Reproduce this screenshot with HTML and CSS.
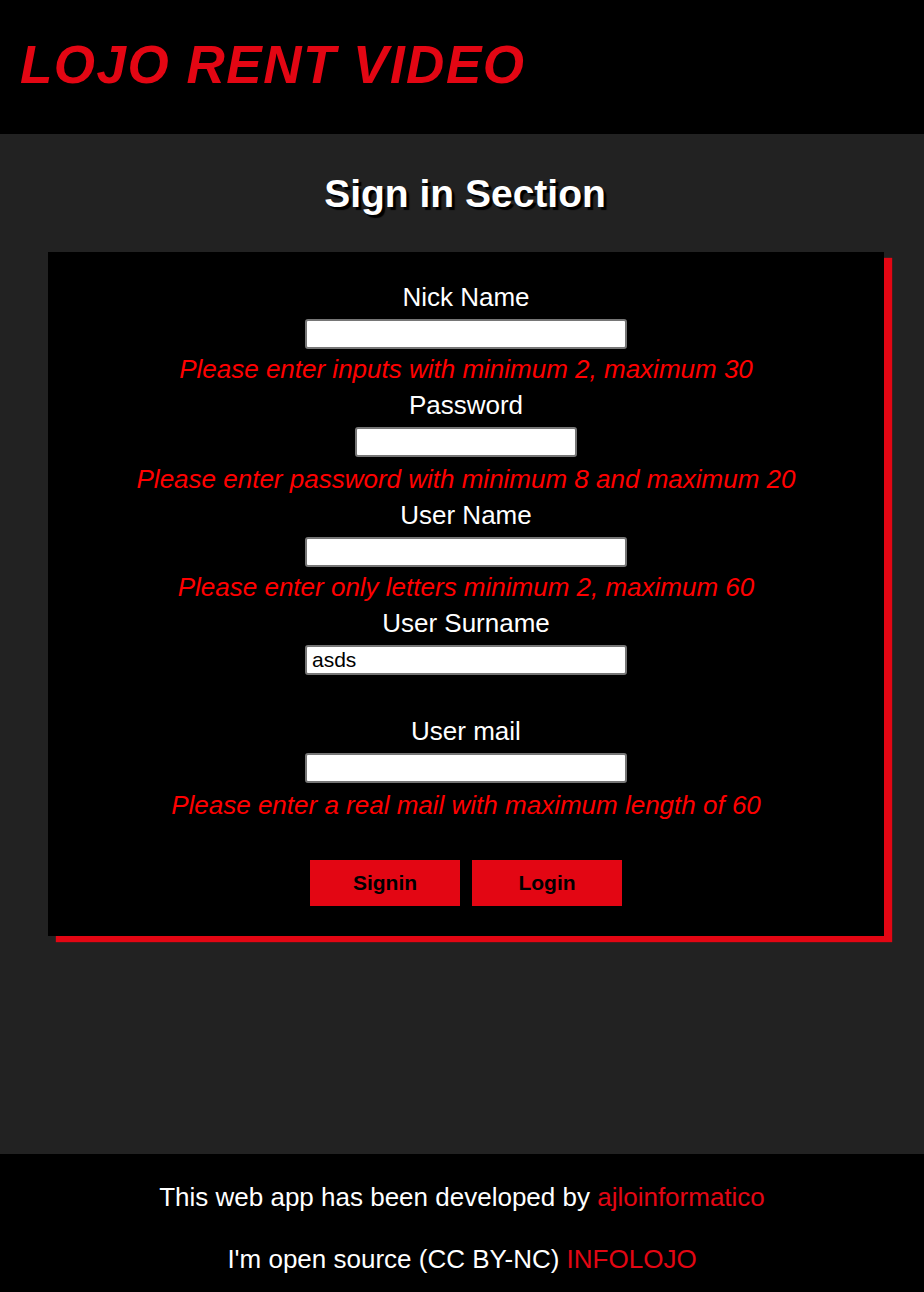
FILE: index.html
```html
<!DOCTYPE html>
<html lang="en">
<head>
<meta charset="utf-8">
<title>Lojo Rent Video</title>
<link rel="stylesheet" href="styles.css">
</head>
<body>
<header class="top">
  <h1 class="brand">LOJO RENT VIDEO</h1>
</header>
<main class="main">
  <h2 class="section-title">Sign in Section</h2>
  <form class="card">
    <div class="field">
      <label class="label" for="nick">Nick Name</label>
      <input class="input" id="nick" type="text">
      <p class="error">Please enter inputs with minimum 2, maximum 30</p>
    </div>
    <div class="field">
      <label class="label" for="pass">Password</label>
      <input class="input input-short" id="pass" type="password">
      <p class="error error-low">Please enter password with minimum 8 and maximum 20</p>
    </div>
    <div class="field">
      <label class="label" for="uname">User Name</label>
      <input class="input" id="uname" type="text">
      <p class="error">Please enter only letters minimum 2, maximum 60</p>
    </div>
    <div class="field">
      <label class="label" for="usurname">User Surname</label>
      <input class="input" id="usurname" type="text" value="asds">
      <p class="error"></p>
    </div>
    <div class="field">
      <label class="label" for="umail">User mail</label>
      <input class="input" id="umail" type="email">
      <p class="error error-low">Please enter a real mail with maximum length of 60</p>
    </div>
    <div class="actions">
      <button class="btn" type="button">Signin</button>
      <button class="btn" type="button">Login</button>
    </div>
  </form>
</main>
<footer class="footer">
  <p class="foot-line">This web app has been developed by <a class="foot-link" href="#">ajloinformatico</a></p>
  <p class="foot-line">I'm open source (CC BY-NC) <a class="foot-link" href="#">INFOLOJO</a></p>
</footer>
</body>
</html>
```

FILE: styles.css
```css
* { box-sizing: border-box; }
html, body { margin: 0; padding: 0; }
body {
  background: #222222;
  font-family: "Liberation Sans", Arial, sans-serif;
  color: #ffffff;
  width: 924px;
  height: 1292px;
  display: flex;
  flex-direction: column;
}
.top {
  background: #000000;
  height: 134px;
  display: flex;
  align-items: center;
  padding-left: 20px;
}
.brand {
  margin: -3px 0 0 0;
  font-size: 53px;
  font-weight: bold;
  font-style: italic;
  letter-spacing: 1.5px;
  color: #e30613;
  line-height: 1.15;
}
.main {
  flex: 1;
  padding-top: 37px;
}
.section-title {
  margin: 0;
  padding-left: 6px;
  text-align: center;
  font-size: 39px;
  font-weight: bold;
  line-height: 45px;
  color: #ffffff;
  text-shadow: 3px 3px 1px #000000;
}
.card {
  margin: 36px 0 0 48px;
  width: 836px;
  background: #000000;
  box-shadow: 8px 6px 1px #e30613;
  padding: 31px 0 30px;
  display: flex;
  flex-direction: column;
  align-items: center;
  gap: 8px;
}
.field {
  display: flex;
  flex-direction: column;
  align-items: center;
}
.label {
  font-size: 26px;
  line-height: 28px;
  color: #ffffff;
}
.input {
  margin-top: 8px;
  width: 322px;
  height: 30px;
  border: 2px solid #767676;
  border-radius: 3px;
  background: #ffffff;
  font-family: "Liberation Sans", Arial, sans-serif;
  font-size: 21px;
  color: #000000;
  padding: 0 5px;
}
.input-short { width: 222px; }
.error {
  margin: 6px 0 0 0;
  font-size: 26px;
  line-height: 28px;
  height: 28px;
  font-style: italic;
  color: #ff0000;
}
.error-low { margin-top: 8px; }
.actions {
  margin-top: 33px;
  display: flex;
  gap: 12px;
}
.btn {
  width: 150px;
  height: 46px;
  border: none;
  background: #e30613;
  color: #000000;
  font-family: "Liberation Sans", Arial, sans-serif;
  font-size: 21px;
  font-weight: bold;
  padding: 0;
}
.footer {
  background: #000000;
  height: 138px;
  display: flex;
  flex-direction: column;
  align-items: center;
  padding-top: 29px;
  gap: 34px;
}
.foot-line {
  margin: 0;
  font-size: 26px;
  line-height: 28px;
  color: #ffffff;
}
.foot-link {
  color: #e30613;
  text-decoration: none;
}
```
